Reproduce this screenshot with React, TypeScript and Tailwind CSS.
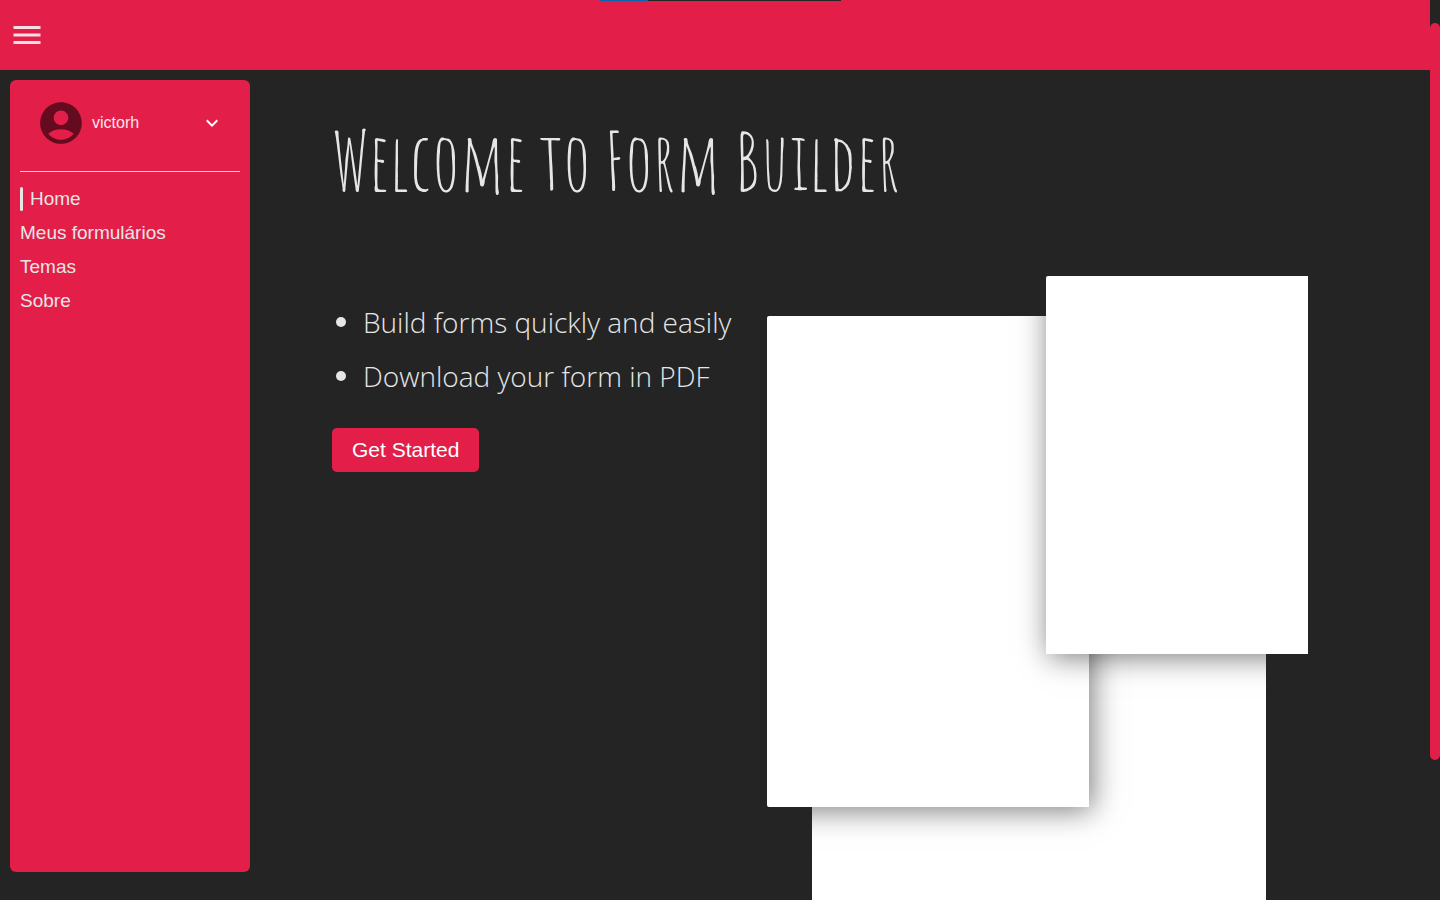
import { MdAccountCircle, MdKeyboardArrowDown, MdMenu } from "react-icons/md";

const links = ["Home", "Meus formulários", "Temas", "Sobre"];
const features = ["Build forms quickly and easily", "Download your form in PDF"];

function Header() {
  return (
    <header className="relative flex h-[70px] shrink-0 items-center bg-[#e31e48] pl-[9px]">
      <button type="button" aria-label="Menu" className="text-[#f6dfe5]">
        <MdMenu size={36} />
      </button>
      <div className="absolute top-0 left-[600px] flex h-px w-[241px] bg-[#242424]">
        <div className="w-12 bg-[#0a63b0]" />
      </div>
    </header>
  );
}

function Sidebar() {
  return (
    <aside className="m-[10px] h-[calc(100vh-108px)] w-60 shrink-0 rounded-md bg-[#e31e48] px-[10px] font-['Liberation_Sans',Arial,sans-serif]">
      <button
        type="button"
        className="flex h-[92px] w-full items-center border-b border-[#f3d5dc] pr-4 pb-[5px] pl-4 text-left text-base text-[#fbe4ea]"
      >
        <MdAccountCircle size={50} className="shrink-0 text-[#650b20]" />
        <span className="ml-[6px] flex-1">victorh</span>
        <MdKeyboardArrowDown size={24} className="text-white" />
      </button>
      <nav className="mt-[15px] flex flex-col gap-[10px] text-[19px] leading-6 text-[#e6e6e6]">
        {links.map((link, i) => (
          <a key={link} href="#" className="flex items-center gap-[7px]">
            {i === 0 && <span className="h-6 w-[3px] rounded-xs bg-[#e6e6e6]" />}
            {link}
          </a>
        ))}
      </nav>
    </aside>
  );
}

/* Each sheet clips the shadows cast on it, so they fall on paper only. */
function Papers() {
  return (
    <div className="relative mt-[62px] h-[600px] w-[541px] shrink-0">
      <div className="absolute top-[200px] left-[45px] h-[600px] w-[454px] overflow-hidden bg-white">
        <div className="absolute -top-40 -left-[45px] h-[491px] w-[322px] shadow-[3px_3px_28px_rgba(0,0,0,0.53)]" />
        <div className="absolute -top-[200px] left-[234px] h-[378px] w-[262px] shadow-[3px_3px_28px_rgba(0,0,0,0.53)]" />
      </div>
      <div className="absolute top-10 left-0 h-[491px] w-[322px] overflow-hidden rounded-xs bg-white">
        <div className="absolute -top-10 left-[279px] h-[378px] w-[262px] shadow-[3px_3px_28px_rgba(0,0,0,0.53)]" />
      </div>
      <div className="absolute top-0 right-0 h-[378px] w-[262px] rounded-l-xs bg-white" />
    </div>
  );
}

export default function App() {
  return (
    <div className="flex h-screen overflow-hidden bg-[#242424]">
      <div className="flex min-w-0 flex-1 flex-col">
        <Header />
        <div className="flex min-h-0 flex-1">
          <Sidebar />
          <main className="min-w-0 flex-1 overflow-hidden pt-[38px] pr-[122px] pl-[72px] text-[#e6e6e6]">
            <h1 className="h-[106px] font-['Amatic_SC',sans-serif] text-[80px] leading-[106px] whitespace-nowrap">
              Welcome to Form Builder
            </h1>
            <div className="flex justify-between">
              <div className="pt-[88px]">
                <ul className="flex flex-col gap-[14px] font-['Open_Sans',sans-serif] text-[28px] leading-10 font-light whitespace-nowrap">
                  {features.map((feature) => (
                    <li key={feature} className="flex items-center">
                      <span className="mr-[17px] ml-1 size-[10px] rounded-full bg-[#e6e6e6]" />
                      {feature}
                    </li>
                  ))}
                </ul>
                <button
                  type="button"
                  className="mt-8 h-11 rounded-[5px] bg-[#e31e48] px-5 font-['Liberation_Sans',Arial,sans-serif] text-[21px] whitespace-nowrap text-white"
                >
                  Get Started
                </button>
              </div>
              <Papers />
            </div>
          </main>
        </div>
      </div>
      <div className="w-[10px] shrink-0 pt-[23px]">
        <div className="h-[84%] rounded-full bg-[#e31e48]" />
      </div>
    </div>
  );
}
